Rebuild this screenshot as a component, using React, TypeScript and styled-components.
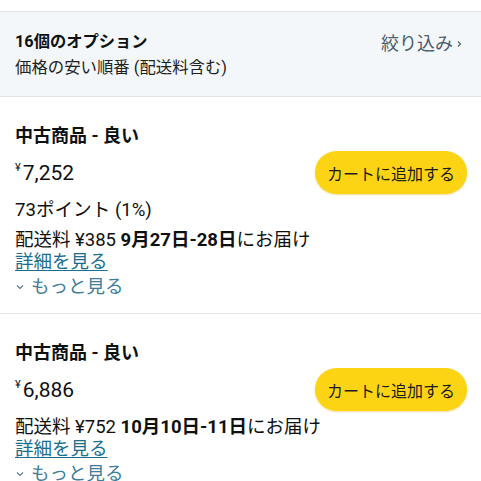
import styled, { createGlobalStyle } from 'styled-components';

interface Offer {
  condition: string;
  price: string;
  points?: string;
  shipping: string;
  delivery: string;
}

const offers: Offer[] = [
  {
    condition: '中古商品 - 良い',
    price: '7,252',
    points: '73ポイント (1%)',
    shipping: '配送料 ¥385',
    delivery: '9月27日-28日',
  },
  {
    condition: '中古商品 - 良い',
    price: '6,886',
    shipping: '配送料 ¥752',
    delivery: '10月10日-11日',
  },
];

const GlobalStyle = createGlobalStyle`
  body {
    margin: 0;
    background: #fff;
    color: #0f1111;
    font-family: "Roboto", "Noto Sans CJK JP", sans-serif;
  }
`;

const ChevronRight = () => (
  <svg width="7" height="10" viewBox="0 0 7 10">
    <path d="M2 2.5 L4.5 5 L2 7.5" fill="none" stroke="#55646e" strokeWidth="1.2" />
  </svg>
);

const ChevronDown = () => (
  <svg width="10" height="8" viewBox="0 0 10 8">
    <path d="M2 2.5 L5 5.5 L8 2.5" fill="none" stroke="#5a7a8c" strokeWidth="1.2" />
  </svg>
);

export default function App() {
  return (
    <Page>
      <GlobalStyle />
      <Header>
        <HeaderText>
          <HeaderTitle>16個のオプション</HeaderTitle>
          <HeaderSub>価格の安い順番 (配送料含む)</HeaderSub>
        </HeaderText>
        <FilterLink>
          絞り込み
          <ChevronRight />
        </FilterLink>
      </Header>
      {offers.map((offer, i) => (
        <OfferCard key={i} $last={i === offers.length - 1}>
          <Condition>{offer.condition}</Condition>
          <PriceRow>
            <Price>
              <Yen>¥</Yen>
              {offer.price}
            </Price>
            <CartButton>カートに追加する</CartButton>
          </PriceRow>
          {offer.points && <Points>{offer.points}</Points>}
          <Delivery $spaced={!offer.points}>
            {offer.shipping} <b>{offer.delivery}</b>にお届け
          </Delivery>
          <DetailLink>詳細を見る</DetailLink>
          <MoreLink>
            <ChevronDown />
            もっと見る
          </MoreLink>
        </OfferCard>
      ))}
    </Page>
  );
}

const Page = styled.div`
  padding-top: 11px;
  width: 481px;
  overflow: hidden;
`;

const Header = styled.div`
  display: flex;
  justify-content: space-between;
  align-items: flex-start;
  background: #f3f7f9;
  border-top: 1px solid #e4e7e9;
  border-bottom: 1px solid #e1e4e6;
  padding: 19px 15px 17px 15px;
`;

const HeaderText = styled.div`
  display: flex;
  flex-direction: column;
  gap: 4px;
`;

const HeaderTitle = styled.div`
  font-size: 16.3px;
  font-weight: 700;
  line-height: 22px;
`;

const HeaderSub = styled.div`
  font-size: 16.4px;
  line-height: 22px;
  color: #1f2222;
`;

const FilterLink = styled.div`
  display: flex;
  align-items: center;
  gap: 3px;
  font-size: 18px;
  line-height: 26px;
  color: #4a5d6c;
  margin-right: 3px;
`;

const OfferCard = styled.div<{ $last: boolean }>`
  display: flex;
  flex-direction: column;
  padding: 27px 15px 14px 15px;
  border-bottom: ${p => (p.$last ? 'none' : '1px solid #e4e6e6')};
`;

const Condition = styled.div`
  font-size: 18px;
  font-weight: 700;
  line-height: 24px;
`;

const PriceRow = styled.div`
  display: flex;
  justify-content: space-between;
  align-items: center;
  margin-top: 3px;
  margin-right: -1px;
`;

const Price = styled.div`
  font-size: 21px;
  line-height: 28px;
  display: flex;
  align-items: flex-start;
  margin-top: 1px;
`;

const Yen = styled.span`
  font-size: 11px;
  line-height: 18px;
  margin-right: 2px;
`;

const CartButton = styled.button`
  background: #fcd413;
  border: none;
  border-radius: 22px;
  height: 43px;
  width: 152px;
  padding: 0;
  font-family: inherit;
  font-size: 16px;
  color: #1c1c1c;
  box-shadow: 0 1px 2px rgba(213, 169, 9, 0.4);
`;

const Points = styled.div`
  font-size: 18.6px;
  line-height: 22px;
  margin-top: 5px;
`;

const Delivery = styled.div<{ $spaced: boolean }>`
  font-size: 18.5px;
  line-height: 22px;
  margin-top: ${p => (p.$spaced ? '5px' : '8px')};
  white-space: nowrap;

  b {
    font-weight: 700;
  }
`;

const DetailLink = styled.a`
  font-size: 18.5px;
  line-height: 22px;
  color: #1b6f8e;
  text-decoration: underline;
  text-underline-offset: 2px;
  align-self: flex-start;
`;

const MoreLink = styled.div`
  display: flex;
  align-items: center;
  gap: 6px;
  font-size: 18.5px;
  line-height: 24px;
  color: #3f7d98;
  margin-top: 2px;
`;
